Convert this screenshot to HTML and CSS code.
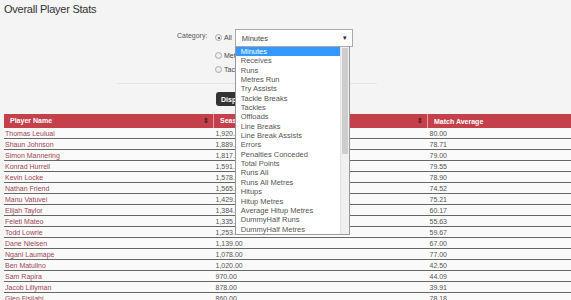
FILE: index.html
```html
<!DOCTYPE html>
<html lang="en">
<head>
    <meta charset="UTF-8">
    <title>Overall Player Stats</title>
    <link rel="stylesheet" href="styles.css">
</head>
<body>
    <h1 class="page-title">Overall Player Stats</h1>

    <form class="filter-form">
        <div class="filter-row">
            <label class="filter-label">Category:</label>
            <div class="filter-options">
                <div class="option-line">
                    <label class="radio"><span class="radio-dot checked"></span>All</label>
                    <div class="select-wrap">
                        <div class="select-box">
                            <span>Minutes</span>
                            <span class="select-arrow">&#9660;</span>
                        </div>
                        <div class="select-list">
                            <ul>
                                <li class="selected">Minutes</li>
                                <li>Receives</li>
                                <li>Runs</li>
                                <li>Metres Run</li>
                                <li>Try Assists</li>
                                <li>Tackle Breaks</li>
                                <li>Tackles</li>
                                <li>Offloads</li>
                                <li>Line Breaks</li>
                                <li>Line Break Assists</li>
                                <li>Errors</li>
                                <li>Penalties Conceded</li>
                                <li>Total Points</li>
                                <li>Runs All</li>
                                <li>Runs All Metres</li>
                                <li>Hitups</li>
                                <li>Hitup Metres</li>
                                <li>Average Hitup Metres</li>
                                <li>DummyHalf Runs</li>
                                <li>DummyHalf Metres</li>
                            </ul>
                            <div class="scroll-track"><div class="scroll-thumb"></div></div>
                        </div>
                    </div>
                </div>
                <div class="option-line">
                    <label class="radio"><span class="radio-dot"></span>Metres</label>
                </div>
                <div class="option-line">
                    <label class="radio"><span class="radio-dot"></span>Tackles</label>
                </div>
            </div>
        </div>
        <div class="form-divider"></div>
        <div class="button-row">
            <button type="button" class="btn-display">Display</button>
        </div>
    </form>

    <table class="stats-table">
        <thead>
            <tr>
                <th class="col-name">Player Name <span class="sort">&#8661;</span></th>
                <th class="col-season">Season Total <span class="sort">&#8661;</span></th>
                <th class="col-avg">Match Average</th>
            </tr>
        </thead>
        <tbody>
            <tr><td><a href="#">Thomas Leuluai</a></td><td>1,920.00</td><td>80.00</td></tr>
            <tr><td><a href="#">Shaun Johnson</a></td><td>1,889.00</td><td>78.71</td></tr>
            <tr><td><a href="#">Simon Mannering</a></td><td>1,817.00</td><td>79.00</td></tr>
            <tr><td><a href="#">Konrad Hurrell</a></td><td>1,591.00</td><td>79.55</td></tr>
            <tr><td><a href="#">Kevin Locke</a></td><td>1,578.00</td><td>78.90</td></tr>
            <tr><td><a href="#">Nathan Friend</a></td><td>1,565.00</td><td>74.52</td></tr>
            <tr><td><a href="#">Manu Vatuvei</a></td><td>1,429.00</td><td>75.21</td></tr>
            <tr><td><a href="#">Elijah Taylor</a></td><td>1,384.00</td><td>60.17</td></tr>
            <tr><td><a href="#">Feleti Mateo</a></td><td>1,335.00</td><td>55.63</td></tr>
            <tr><td><a href="#">Todd Lowrie</a></td><td>1,253.00</td><td>59.67</td></tr>
            <tr><td><a href="#">Dane Nielsen</a></td><td>1,139.00</td><td>67.00</td></tr>
            <tr><td><a href="#">Ngani Laumape</a></td><td>1,078.00</td><td>77.00</td></tr>
            <tr><td><a href="#">Ben Matulino</a></td><td>1,020.00</td><td>42.50</td></tr>
            <tr><td><a href="#">Sam Rapira</a></td><td>970.00</td><td>44.09</td></tr>
            <tr><td><a href="#">Jacob Lillyman</a></td><td>878.00</td><td>39.91</td></tr>
            <tr><td><a href="#">Glen Fisiiahi</a></td><td>860.00</td><td>78.18</td></tr>
        </tbody>
    </table>
</body>
</html>
```

FILE: styles.css
```css
/* Stats page */
body {
    margin: 0;
    background-color: #f4f4f4;
    font-family: "Liberation Sans", Arial, sans-serif;
    color: #444;
    overflow: hidden;
}

.page-title {
    margin: 0;
    padding: 3px 4px 0;
    height: 18px;
    font-size: 11px;
    letter-spacing: -0.25px;
    font-weight: normal;
    color: #333;
}

.filter-form {
    padding-left: 177px;
}

.filter-row {
    display: flex;
    gap: 10px;
    padding-top: 8px;
}

.filter-label {
    font-size: 7px;
    color: #555;
    padding-top: 3px;
    width: 28px;
}

.option-line {
    display: flex;
    align-items: flex-start;
    gap: 3px;
    height: 14px;
}

.option-line:first-child {
    height: 23px;
}

.radio {
    display: flex;
    align-items: center;
    gap: 2px;
    font-size: 7px;
    color: #444;
    padding-top: 5px;
}

.option-line + .option-line .radio {
    padding-top: 0;
}

.radio-dot {
    width: 7px;
    height: 7px;
    border: 1px solid #aaa;
    border-radius: 50%;
    background: #eee;
    box-sizing: border-box;
    position: relative;
}

.radio-dot.checked::after {
    content: "";
    position: absolute;
    left: 1.5px;
    top: 1.5px;
    width: 2px;
    height: 2px;
    border-radius: 50%;
    background: #444;
}

.select-wrap {
    position: relative;
}

.select-box {
    width: 118px;
    height: 18px;
    box-sizing: border-box;
    border: 1px solid #aaa;
    background: #fff;
    display: flex;
    align-items: center;
    justify-content: space-between;
    padding: 0 4px 0 6px;
    font-size: 7.5px;
    color: #444;
}

.select-arrow {
    font-size: 6px;
    color: #222;
}

.select-list {
    position: absolute;
    top: 18px;
    left: 0;
    width: 115px;
    height: 188px;
    box-sizing: border-box;
    border: 1px solid #999;
    border-top: none;
    background: #fff;
    display: flex;
    z-index: 5;
}

.select-list ul {
    list-style: none;
    margin: 0;
    padding: 0;
    flex: 1;
}

.select-list li {
    height: 9.35px;
    line-height: 9.35px;
    padding-left: 5px;
    font-size: 7.5px;
    color: #555;
    white-space: nowrap;
}

.select-list li.selected {
    background: #3399ff;
    color: #fff;
}

.scroll-track {
    width: 9px;
    background: #f0f0f0;
    border-left: 1px solid #e2e2e2;
    padding: 1px 1px 0;
    box-sizing: border-box;
}

.scroll-thumb {
    height: 106px;
    background: #cdcdcd;
}

.form-divider {
    height: 1px;
    background: #e6e6e6;
    margin: 3px 0 0 -60px;
    width: 260px;
}

.button-row {
    display: flex;
    padding: 8px 0 0 39px;
    height: 22px;
}

.btn-display {
    height: 14px;
    padding: 0 5px;
    border: none;
    border-radius: 3px;
    background: #333;
    color: #fff;
    font-family: inherit;
    font-size: 7px;
    font-weight: bold;
    cursor: pointer;
}

.stats-table {
    margin-left: 4px;
    width: 600px;
    border-collapse: collapse;
    font-size: 7px;
    table-layout: fixed;
}

.stats-table th {
    background: #c4404a;
    color: #fff;
    text-align: left;
    height: 14px;
    padding: 0 4px 0 6px;
    font-size: 7px;
    font-weight: bold;
    border-left: 1px solid #e9a0a5;
}

.stats-table th:first-child {
    border-left: none;
}

.stats-table .col-name {
    width: 199px;
}

.stats-table .col-season {
    width: 203px;
}

.sort {
    float: right;
    font-size: 7px;
    color: #5a1a1e;
}

.stats-table td {
    height: 10px;
    padding: 0 2px;
    background: #fafafa;
    border-bottom: 1px solid #666;
    color: #555;
    white-space: nowrap;
}

.stats-table td:first-child {
    padding-left: 1px;
}

.stats-table a {
    color: #9e4652;
    text-decoration: none;
}
```
